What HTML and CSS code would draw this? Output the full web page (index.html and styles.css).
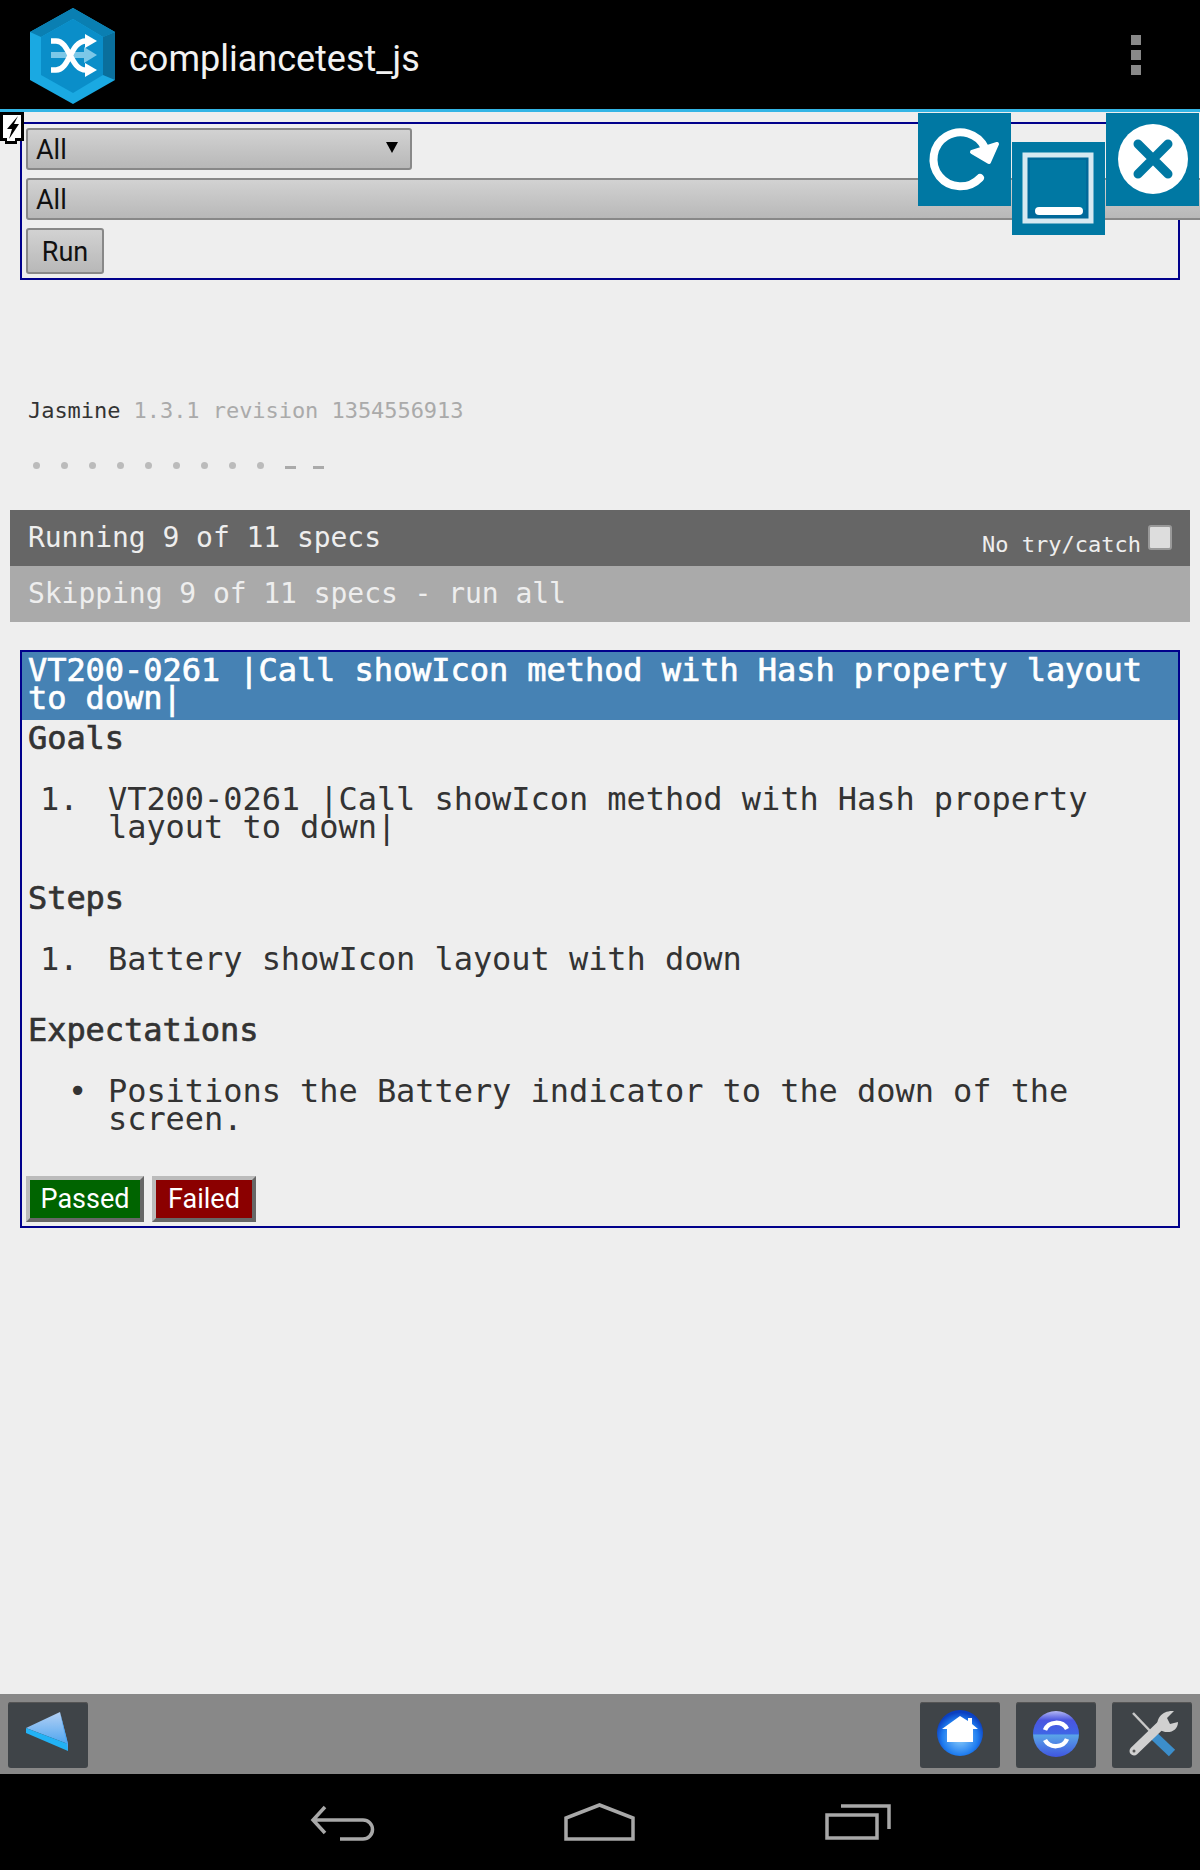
FILE: index.html
```html
<!DOCTYPE html>
<html lang="en">

<head>
    <meta charset="UTF-8">
    <title>compliancetest_js</title>
    <link rel="stylesheet" href="styles.css">
</head>

<body>
    <header class="actionbar">
        <svg class="logo" width="86" height="97" viewBox="30 8 86 97">
            <polygon points="73,8 115,32 115,80 73,104 30,80 30,32" fill="#1aa9e2"/>
            <polygon points="73,8 115,32 103,37 73,19 41,37 30,32" fill="#0a7fb2"/>
            <polygon points="115,32 115,80 103,75 103,37" fill="#0a6f9c"/>
            <polygon points="73,19 103,37 103,75 73,93 41,75 41,37" fill="#0a8ec9"/>
            <path d="M51 55 H90" stroke="#7cc8e8" stroke-width="6"/>
            <polygon points="84,47 97,55 84,63" fill="#7cc8e8"/>
            <path d="M51 41 H56 C70 41 70 70 86 70 M51 70 H56 C70 70 70 41 86 41" fill="none" stroke="#fff" stroke-width="5.5"/>
            <polygon points="85,34 97,41 85,48" fill="#fff"/>
            <polygon points="85,63 97,70 85,77" fill="#fff"/>
        </svg>
        <span class="app-title">compliancetest_js</span>
        <div class="overflow-menu"><i></i><i></i><i></i></div>
    </header>

    <main class="content">
        <svg class="charge-badge" width="24" height="32" viewBox="0 0 24 32">
            <path d="M0 0 H24 V29 H17 V32 H5 V29 H0 Z" fill="#000"/>
            <path d="M3 3 H21 V26 H15 V29 H7 V26 H3 Z" fill="#fff"/>
            <polygon points="18,4 7,17 12,17 9,27 19,12 14,12" fill="#000"/>
        </svg>

        <div class="float-btn float-reload">
            <svg width="93" height="93" viewBox="0 0 93 93">
                <path d="M62 65 A27 27 0 1 1 67 35" fill="none" stroke="#fff" stroke-width="8" stroke-linecap="round"/>
                <polygon points="79,31 71,49 54,39" fill="#fff" stroke="#fff" stroke-width="4" stroke-linejoin="round"/>
            </svg>
        </div>
        <div class="float-btn float-min">
            <svg width="93" height="93" viewBox="0 0 93 93">
                <rect x="13" y="13" width="66" height="66" fill="#00699a" stroke="#d6e9f1" stroke-width="5"/>
                <rect x="18" y="18" width="56" height="50" fill="#0078a3"/>
                <rect x="23" y="65" width="48" height="8" rx="4" fill="#fff"/>
            </svg>
        </div>
        <div class="float-btn float-close">
            <svg width="93" height="93" viewBox="0 0 93 93">
                <circle cx="47" cy="46" r="35" fill="#fff"/>
                <path d="M32 31 L62 61 M62 31 L32 61" stroke="#0078a3" stroke-width="9" stroke-linecap="round"/>
            </svg>
        </div>

        <form class="filter-box">
            <div class="select select-short"><span>All</span><i class="arrow"></i></div>
            <div class="select select-wide"><span>All</span></div>
            <button type="button" class="run-btn">Run</button>
        </form>

        <div class="jasmine-banner">
            <span class="jasmine-name">Jasmine</span> <span class="jasmine-version">1.3.1 revision 1354556913</span>
        </div>

        <ul class="symbols">
            <li class="dot"></li><li class="dot"></li><li class="dot"></li>
            <li class="dot"></li><li class="dot"></li><li class="dot"></li>
            <li class="dot"></li><li class="dot"></li><li class="dot"></li>
            <li class="dash"></li><li class="dash"></li>
        </ul>

        <div class="bar bar-running">
            <span>Running 9 of 11 specs</span>
            <label class="no-try">No try/catch<i class="checkbox"></i></label>
        </div>
        <div class="bar bar-skipping">Skipping 9 of 11 specs - run all</div>

        <section class="spec">
            <h2 class="spec-title">VT200-0261 |Call showIcon method with Hash property layout to down|</h2>
            <h3 class="spec-head spec-head-first">Goals</h3>
            <ol class="spec-list">
                <li>VT200-0261 |Call showIcon method with Hash property layout to down|</li>
            </ol>
            <h3 class="spec-head">Steps</h3>
            <ol class="spec-list">
                <li>Battery showIcon layout with down</li>
            </ol>
            <h3 class="spec-head">Expectations</h3>
            <ul class="spec-list">
                <li>Positions the Battery indicator to the down of the screen.</li>
            </ul>
            <div class="verdict">
                <button type="button" class="passed">Passed</button>
                <button type="button" class="failed">Failed</button>
            </div>
        </section>
    </main>

    <div class="toolbar">
        <div class="tool-btn">
            <svg width="80" height="66" viewBox="0 0 80 66">
                <defs>
                    <linearGradient id="triTop" x1="0" y1="0" x2="0" y2="1">
                        <stop offset="0" stop-color="#b4d0f4"/>
                        <stop offset="1" stop-color="#4fa6f0"/>
                    </linearGradient>
                </defs>
                <polygon points="52,10 18,26 60,42" fill="url(#triTop)"/>
                <polygon points="18,26 18,31 60,49 60,42" fill="#22b2f5"/>
                <polygon points="52,10 60,42 60,49" fill="#4da6f5"/>
            </svg>
        </div>
        <div class="tool-spacer"></div>
        <div class="tool-btn">
            <svg width="80" height="66" viewBox="0 0 80 66">
                <defs>
                    <radialGradient id="homeBall" cx="0.5" cy="0.6" r="0.55">
                        <stop offset="0" stop-color="#8fd0fb"/>
                        <stop offset="0.7" stop-color="#1f7df0"/>
                        <stop offset="1" stop-color="#0b3fc0"/>
                    </radialGradient>
                </defs>
                <circle cx="40" cy="31" r="23" fill="url(#homeBall)"/>
                <polygon points="40,14 48,19 48,16 52,16 52,22 58,27 53,27 53,40 27,40 27,27 22,27" fill="#fff"/>
            </svg>
        </div>
        <div class="tool-btn">
            <svg width="80" height="66" viewBox="0 0 80 66">
                <defs>
                    <linearGradient id="syncBall" x1="0" y1="0" x2="0" y2="1">
                        <stop offset="0" stop-color="#b4b8f5"/>
                        <stop offset="0.2" stop-color="#4a55e0"/>
                        <stop offset="0.5" stop-color="#3f66e6"/>
                        <stop offset="0.52" stop-color="#5aa5e8"/>
                        <stop offset="1" stop-color="#3f56e0"/>
                    </linearGradient>
                </defs>
                <circle cx="40" cy="32" r="23" fill="url(#syncBall)"/>
                <path d="M29 28 A12 11 0 0 1 51 27 M51 37 A12 11 0 0 1 29 38" fill="none" stroke="#fff" stroke-width="4.5"/>
            </svg>
        </div>
        <div class="tool-btn">
            <svg width="80" height="66" viewBox="0 0 80 66">
                <path d="M21 11 L40 31" stroke="#c8c8c8" stroke-width="2.5"/>
                <path d="M41 33 L60 51" stroke="#3c8ecb" stroke-width="9"/>
                <path d="M22 49 L49 23" stroke="#d0d0d0" stroke-width="9" stroke-linecap="round"/>
                <path d="M46 27 C43 17 50 8 62 9 L55 16 L58 22 L66 20 C66 30 55 33 46 27 Z" fill="#d0d0d0"/>
                <circle cx="22" cy="49" r="1.5" fill="#555"/>
            </svg>
        </div>
    </div>

    <nav class="navbar">
        <svg class="nav-back" width="66" height="36" viewBox="0 0 66 36">
            <path d="M15 2 L3 15 L15 28 M3 15 H53 A9.5 9.5 0 0 1 53 34 H30" fill="none" stroke="#a8a8a8" stroke-width="3.5"/>
        </svg>
        <svg class="nav-home" width="71" height="38" viewBox="0 0 71 38">
            <path d="M2 36 V15 L35.5 2 L69 15 V36 Z" fill="none" stroke="#a8a8a8" stroke-width="3.5"/>
        </svg>
        <svg class="nav-recent" width="66" height="36" viewBox="0 0 66 36">
            <rect x="2" y="11" width="50" height="23" fill="none" stroke="#a8a8a8" stroke-width="3.5"/>
            <path d="M16 2 H64 V25" fill="none" stroke="#a8a8a8" stroke-width="3.5"/>
        </svg>
    </nav>
</body>

</html>
```

FILE: styles.css
```css
html, body {
    margin: 0;
    height: 1870px;
    overflow: hidden;
}

body {
    display: flex;
    flex-direction: column;
    background: #eee;
    font-family: "DejaVu Sans Mono", monospace;
    color: #333;
}

/* top action bar */
.actionbar {
    height: 109px;
    box-sizing: content-box;
    flex: none;
    display: flex;
    align-items: center;
    background: #000;
    border-bottom: 3px solid #33b5e5;
    padding-left: 30px;
    font-family: Roboto, sans-serif;
}

.logo { margin-top: 3px; }

.app-title {
    margin-left: 13px;
    color: #f2f2f2;
    font-size: 36px;
    margin-top: 8px;
}

.overflow-menu {
    margin-left: auto;
    margin-right: 59px;
    display: flex;
    flex-direction: column;
    gap: 5px;
}

.overflow-menu i {
    display: block;
    width: 10px;
    height: 10px;
    background: #888;
}

/* page */
.content {
    flex: 1;
    position: relative;
    overflow: hidden;
}

.charge-badge {
    position: absolute;
    left: 0;
    top: 0;
    z-index: 2;
}

.float-btn {
    position: absolute;
    width: 93px;
    height: 93px;
    background: #0078a3;
    z-index: 2;
}

.float-btn svg { filter: blur(0.5px); }

.float-reload { left: 918px; top: 1px; }
.float-min { left: 1012px; top: 30px; }
.float-close { left: 1106px; top: 1px; }

.filter-box {
    margin: 10px 20px 0 20px;
    border: 2px solid #00008b;
    padding: 4px;
    display: flex;
    flex-direction: column;
    align-items: flex-start;
    gap: 8px;
}

.select, .run-btn {
    box-sizing: border-box;
    border: 2px solid #888;
    border-radius: 3px;
    background: linear-gradient(#d2d2d2, #b8b8b8);
    font-family: Roboto, sans-serif;
    font-size: 27px;
    color: #111;
}

.select {
    height: 42px;
    flex: none;
    display: flex;
    align-items: center;
    justify-content: space-between;
    padding: 2px 12px 0 8px;
}

.select-short { width: 386px; }
.select-wide { width: 1180px; }

.arrow {
    border-left: 6px solid transparent;
    border-right: 6px solid transparent;
    border-top: 11px solid #000;
    margin-top: -5px;
}

.run-btn {
    width: 78px;
    height: 46px;
    padding: 1px 0 0;
}

/* jasmine reporter */
.jasmine-banner {
    margin: 117px 0 0 28px;
    font-size: 22px;
    line-height: 28px;
    letter-spacing: -0.05px;
}

.jasmine-name { color: #333; }
.jasmine-version { color: #aaa; }

.symbols {
    list-style: none;
    margin: 33px 0 0 33px;
    padding: 0;
    height: 14px;
    display: flex;
    align-items: center;
}

.symbols li {
    width: 28px;
    flex: none;
}

.dot::before {
    content: "";
    display: block;
    width: 7px;
    height: 7px;
    border-radius: 50%;
    background: #bbb;
}

.dash::before {
    content: "";
    display: block;
    width: 11px;
    height: 3px;
    margin-top: 4px;
    background: #aaa;
}

.bar {
    margin: 0 10px;
    height: 56px;
    box-sizing: border-box;
    padding: 0 7px 2px 18px;
    display: flex;
    align-items: center;
    justify-content: space-between;
    font-size: 28px;
    letter-spacing: -0.05px;
    color: #eee;
}

.bar-running {
    margin-top: 38px;
    background: #666;
}

.bar-skipping { background: #aaa; }

.no-try {
    display: flex;
    font-size: 22px;
    line-height: 26px;
    letter-spacing: 0;
    margin: 16px 11px 0 0;
    color: #eee;
}

.checkbox {
    width: 24px;
    height: 25px;
    box-sizing: border-box;
    margin: -7px 0 0 7px;
    border: 2px solid #999;
    border-radius: 3px;
    background: #ddd;
}

/* spec card */
.spec {
    margin: 28px 20px 0 20px;
    border: 2px solid #00008b;
    height: 578px;
    box-sizing: border-box;
    font-size: 32px;
    line-height: 28px;
    letter-spacing: -0.06px;
}

.spec-title {
    margin: 0;
    padding: 4px 6px 8px;
    background: #4682b4;
    color: #fff;
    font-size: 32px;
    font-weight: normal;
    -webkit-text-stroke: 0.7px #fff;
    line-height: 28px;
}

.spec-head {
    margin: 43px 0 0 6px;
    font-size: 32px;
    font-weight: normal;
    -webkit-text-stroke: 0.7px #333;
}

.spec-head-first { margin-top: 4px; }

.spec-list {
    list-style: none;
    margin: 33px 60px 0 0;
    padding-left: 86px;
}

ol.spec-list li::before {
    content: counter(list-item) ".";
    display: inline-block;
    width: 68px;
    margin-left: -68px;
}

ul.spec-list li::before {
    content: "\2022";
    display: inline-block;
    width: 40px;
    margin-left: -40px;
}

.verdict {
    margin: 43px 0 0 4px;
    display: flex;
    gap: 8px;
}

.verdict button {
    height: 46px;
    padding: 0;
    border: 4px outset #bbb;
    font-family: Roboto, sans-serif;
    font-size: 27px;
    color: #fff;
}

.passed { width: 118px; background: #006400; }
.failed { width: 104px; background: #8b0000; }

/* bottom toolbar */
.toolbar {
    flex: none;
    height: 80px;
    box-sizing: border-box;
    background: #888;
    padding: 8px 8px 6px;
    display: flex;
    gap: 16px;
}

.tool-btn {
    width: 80px;
    height: 66px;
    background: #3f4448;
    border-radius: 3px;
    box-shadow: inset 0 1px 0 #555;
}

.tool-btn svg {
    display: block;
    filter: blur(0.6px);
}

.tool-spacer { flex: 1; }

/* system nav */
.navbar {
    flex: none;
    height: 96px;
    background: #000;
    display: flex;
    align-items: center;
    padding-left: 310px;
}

.nav-back { margin-top: 1px; }
.nav-home { margin-left: 188px; margin-top: -1px; }
.nav-recent { margin-left: 190px; }
```
